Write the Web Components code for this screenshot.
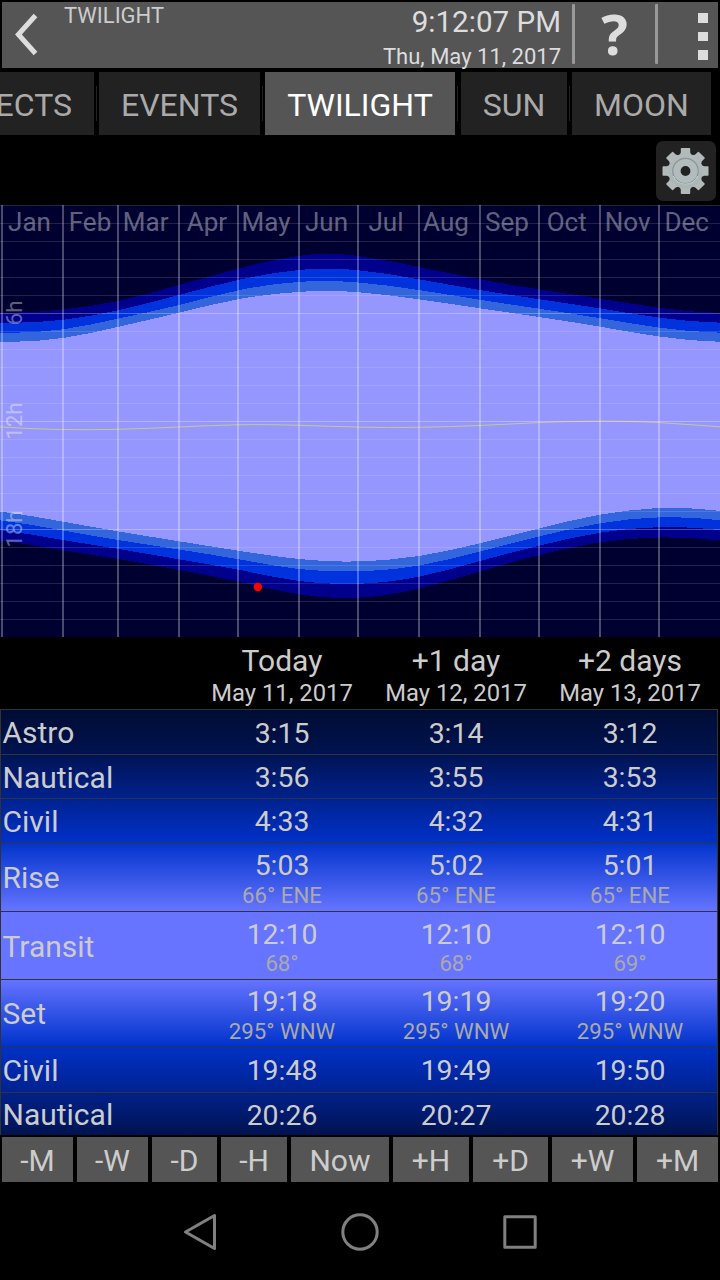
<!DOCTYPE html>
<html lang="en">
<head>
<meta charset="utf-8">
<title>Twilight</title>
<style>
  body {
    margin: 0;
    width: 720px;
    height: 1280px;
    overflow: hidden;
    background: #000;
    color: #ccc;
    font-family: Roboto, "Liberation Sans", sans-serif;
    display: flex;
    flex-direction: column;
  }
</style>
</head>
<body>
  <app-header heading="TWILIGHT" time="9:12:07 PM" date="Thu, May 11, 2017"></app-header>

  <tab-strip>
    <tab-item class="cut" style="width:94px">ECTS</tab-item>
    <tab-item style="width:161px">EVENTS</tab-item>
    <tab-item style="width:190px;margin-right:1px" active>TWILIGHT</tab-item>
    <tab-item style="width:106px">SUN</tab-item>
    <tab-item style="width:139px">MOON</tab-item>
  </tab-strip>

  <settings-bar></settings-bar>
  <twilight-chart></twilight-chart>
  <twilight-table></twilight-table>

  <step-bar>
    <step-button style="width:71px">-M</step-button>
    <step-button style="width:71px">-W</step-button>
    <step-button style="width:65px">-D</step-button>
    <step-button style="width:66px">-H</step-button>
    <step-button style="width:98px">Now</step-button>
    <step-button style="width:76px">+H</step-button>
    <step-button style="width:75px">+D</step-button>
    <step-button style="width:81px">+W</step-button>
    <step-button style="width:81px">+M</step-button>
  </step-bar>

  <system-nav></system-nav>

<script>
// small helper, every element gets an open shadow root from a template
function attach(el, html) {
  const template = document.createElement('template');
  template.innerHTML = html;
  const root = el.attachShadow({ mode: 'open' });
  root.append(template.content.cloneNode(true));
  return root;
}

/* HEADER */
class AppHeader extends HTMLElement {
  constructor() {
    super();
    attach(this, /*html*/`
      <style>
        :host {
          display: flex;
          flex: none;
          margin: 2px 2px 0;
          height: 66px;
          background: #555;
          color: #ddd;
        }
        svg { display: block; flex: none; }
        .title {
          flex: 1;
          padding: 1px 0 0 10px;
          font-size: 22px;
          line-height: 26px;
          color: #ccc;
        }
        .clock { text-align: right; padding-right: 11px; white-space: nowrap; }
        .time { font-size: 29.6px; line-height: 36px; padding-top: 2px; }
        .date { font-size: 22px; line-height: 26px; padding-top: 4px; }
        .rule { width: 3px; height: 60px; margin-top: 2px; background: #999; border-radius: 1px; }
        .help {
          width: 79px;
          padding-right: 1px;
          text-align: center;
          font: bold 56px/62px "Open Sans", "Noto Sans", sans-serif;
        }
        .menu { display: flex; flex-direction: column; gap: 9px; padding: 11px 10px 0 40px; }
        .menu i { width: 10px; height: 9.5px; background: #ddd; }
      </style>
      <svg width="52" height="66"><path d="M33.5 13.5 16.4 32.5 33.5 51.5" fill="none" stroke="#ddd" stroke-width="5"/></svg>
      <div class="title">${this.getAttribute('heading')}</div>
      <div class="clock">
        <div class="time">${this.getAttribute('time')}</div>
        <div class="date">${this.getAttribute('date')}</div>
      </div>
      <div class="rule"></div>
      <div class="help">?</div>
      <div class="rule"></div>
      <div class="menu"><i></i><i></i><i></i></div>
    `);
  }
}
customElements.define('app-header', AppHeader);

/* TABS */
class TabStrip extends HTMLElement {
  constructor() {
    super();
    attach(this, /*html*/`
      <style>
        :host { display: flex; flex: none; gap: 5px; height: 63px; margin-top: 4px; }
      </style>
      <slot></slot>
    `);
  }
}
customElements.define('tab-strip', TabStrip);

class TabItem extends HTMLElement {
  constructor() {
    super();
    attach(this, /*html*/`
      <style>
        :host {
          display: flex;
          flex: none;
          justify-content: center;
          box-sizing: border-box;
          position: relative;
          background: #222;
          color: #aaa;
          font-size: 32px;
          line-height: 66px;
        }
        :host([active]) { background: #555; color: #fff; }
        :host(.cut) { justify-content: flex-end; padding-right: 22px; }
        :host(:not(:last-child))::after {
          content: "";
          position: absolute;
          right: -3px;
          top: 14px;
          width: 1px;
          height: 35px;
          background: #222;
        }
      </style>
      <slot></slot>
    `);
  }
}
customElements.define('tab-item', TabItem);

/* SETTINGS */
class SettingsBar extends HTMLElement {
  constructor() {
    super();
    let teeth = '';
    for (let a = 0; a < 360; a += 45) {
      teeth += `<path d="M-6.5 -15 L-4.7 -18.5 V-22.3 Q-4.7 -23 -4 -23 H4 Q4.7 -23 4.7 -22.3 V-18.5 L6.5 -15 Z" transform="rotate(${a})"/>`;
    }
    attach(this, /*html*/`
      <style>
        :host { display: flex; flex: none; justify-content: flex-end; height: 70px; }
        .btn { width: 60px; height: 60px; margin: 6px 4px 0 0; border-radius: 7px; background: #222; }
        svg { display: block; }
      </style>
      <div class="btn">
        <svg width="60" height="60" viewBox="0 0 60 60">
          <defs>
            <linearGradient id="metal" x1="0" y1="-23" x2="0" y2="23" gradientUnits="userSpaceOnUse">
              <stop offset="0" stop-color="#b3baba"/>
              <stop offset="1" stop-color="#aab5b5"/>
            </linearGradient>
          </defs>
          <g transform="translate(29.5 30)">
            <g fill="url(#metal)">${teeth}<circle r="17.5"/></g>
            <circle r="12.7" fill="#b2bcbc" stroke="#8b9595" stroke-width="1.2"/>
            <path d="M-12.2 5A13.2 13.2 0 0 0 12.2 5" fill="none" stroke="#c8d0d0"/>
            <circle r="4.9" fill="#222"/>
          </g>
        </svg>
      </div>
    `);
  }
}
customElements.define('settings-bar', SettingsBar);

/* CHART */
const months = [
  ['Jan', 2, 29.5], ['Feb', 63, 90], ['Mar', 118, 145.7], ['Apr', 179, 207],
  ['May', 238, 266], ['Jun', 299, 326.5], ['Jul', 358, 386], ['Aug', 419, 446],
  ['Sep', 480, 507], ['Oct', 539, 566.7], ['Nov', 600, 627.7], ['Dec', 659, 686.7]
];

// x, then morning edge of astro / nautical / civil / day
const morning = [
  [0, 312.9, 322.7, 332.7, 341.8], [63, 309.5, 319.8, 329.3, 338], [118, 301, 310.3, 318.7, 326.9],
  [179, 285, 295, 305, 312.7], [240, 268.3, 279.6, 290, 298.9], [299, 255.8, 270, 281.9, 291.9],
  [325, 253.8, 268.6, 281, 290.8], [358, 256, 270.2, 282.5, 292.2], [419, 267, 279.3, 290, 299.3],
  [480, 279.3, 290, 299.8, 308.3], [539, 289.3, 299.2, 308.7, 317], [600, 298.7, 308.4, 318.2, 326.7],
  [659, 307.8, 317.6, 327.6, 336.5], [720, 312.9, 322.7, 332.7, 341.8]
];
// x, then evening edge of day / civil / nautical / astro
const evening = [
  [0, 511.5, 520.3, 530, 540.5], [63, 521.7, 530.5, 540, 550.3], [118, 531.3, 540, 548.9, 559],
  [179, 541.3, 549.5, 559.3, 569.8], [240, 551, 559.5, 570, 582], [299, 559, 569, 581, 594.3],
  [345, 561.6, 571.4, 584, 598.1], [419, 556, 565.5, 576.7, 588.5],
  [480, 543.3, 551.5, 561, 571.5], [539, 528.4, 536.5, 545.7, 555.2], [600, 514.7, 523.3, 532.7, 542.3],
  [660, 508.1, 517.3, 527.1, 537.5], [720, 510.9, 520.2, 530, 540.5]
];
const noon = [
  [0, 426.9], [70, 429.6], [118, 429.3], [179, 427], [238, 424.8],
  [299, 425.3], [358, 427.1], [419, 427.3], [480, 425.5], [539, 422.6], [600, 421.1],
  [659, 422.6], [720, 426.8]
];

// smooth cubic spline through all points, the year wraps round
function curve(rows, col) {
  const p = rows.map(r => [r[0], r[col] - 205]);
  const n = p.length - 1;
  const h = [], s = [], m = [];
  for (let i = 0; i < n; i++) {
    h[i] = p[i + 1][0] - p[i][0];
    s[i] = (p[i + 1][1] - p[i][1]) / h[i];
    m[i] = s[i];
  }
  for (let k = 0; k < 40; k++) {
    for (let i = 0; i < n; i++) {
      const j = (i + n - 1) % n;
      const next = m[(i + 1) % n];
      m[i] = (3 * (h[i] * s[j] + h[j] * s[i]) - h[i] * m[j] - h[j] * next) / (2 * (h[i] + h[j]));
    }
  }
  m[n] = m[0];
  let d = `${p[0][0]} ${p[0][1]}`;
  for (let i = 0; i < n; i++) {
    const t = h[i] / 3;
    const [x0, y0] = p[i];
    const [x1, y1] = p[i + 1];
    d += ` C${x0 + t} ${y0 + m[i] * t} ${x1 - t} ${y1 - m[i + 1] * t} ${x1} ${y1}`;
  }
  return d;
}

class TwilightChart extends HTMLElement {
  constructor() {
    super();
    const fills = ['#00008c', '#0033dd', '#3366dd', '#9696ff'];
    let bands = '';
    fills.forEach((fill, i) => {
      // evening edge is walked right to left
      const back = evening.map(r => [720 - r[0], r[4 - i]]).reverse();
      const bottom = curve(back, 1).replace(/(-?[\d.]+) (-?[\d.]+)/g, (m, x, y) => `${720 - x} ${y}`);
      bands += `<path fill="${fill}" d="M${curve(morning, i + 1)} L${bottom} Z"/>`;
    });

    let grid = '';
    for (let h = 0; h < 24; h++) {
      grid += `<rect y="${h * 18}" width="720" height="1" fill-opacity="${h && h % 6 === 0 ? 0.28 : 0.13}"/>`;
    }
    months.forEach(m => {
      grid += `<rect x="${m[1] - 1}" width="2" height="432" fill-opacity=".29"/>`;
    });

    attach(this, /*html*/`
      <style>
        :host { display: block; flex: none; height: 432px; background: #000030; }
        svg { display: block; }
        text { fill: #fff; fill-opacity: .4; text-anchor: middle; }
        .month { font-size: 26px; }
        .hour { font-size: 22px; }
      </style>
      <svg width="720" height="432" viewBox="0 0 720 432">
        <g shape-rendering="crispEdges">${bands}</g>
        <path d="M${curve(noon, 1)}" fill="none" stroke="#c8c88c" stroke-width="1"/>
        <g fill="#fff">${grid}</g>
        ${months.map(m => `<text class="month" x="${m[2]}" y="26">${m[0]}</text>`).join('')}
        ${[6, 12, 18].map(h => `<text class="hour" transform="translate(22 ${h * 18}) rotate(-90)">${h}h</text>`).join('')}
        <circle cx="257.8" cy="382" r="4.2" fill="#f00"/>
      </svg>
    `);
  }
}
customElements.define('twilight-chart', TwilightChart);

/* TABLE */
const days = [['Today', 'May 11, 2017'], ['+1 day', 'May 12, 2017'], ['+2 days', 'May 13, 2017']];
// label, height, top colour, bottom colour, times, directions
const rows = [
  ['Astro', 45, '#000c33', '#001350', ['3:15', '3:14', '3:12']],
  ['Nautical', 44, '#001353', '#00218c', ['3:56', '3:55', '3:53']],
  ['Civil', 44, '#00228f', '#0030c8', ['4:33', '4:32', '4:31']],
  ['Rise', 69, '#0033cc', '#6674ff', ['5:03', '5:02', '5:01'], ['66° ENE', '65° ENE', '65° ENE']],
  ['Transit', 68, '#6674ff', '#6674ff', ['12:10', '12:10', '12:10'], ['68°', '68°', '69°']],
  ['Set', 67, '#6674ff', '#0033cc', ['19:18', '19:19', '19:20'], ['295° WNW', '295° WNW', '295° WNW']],
  ['Civil', 46, '#0031c8', '#00228f', ['19:48', '19:49', '19:50']],
  ['Nautical', 43, '#00218c', '#001350', ['20:26', '20:27', '20:28']]
];

class TwilightTable extends HTMLElement {
  constructor() {
    super();
    const head = days.map(d => `<div class="day"><b>${d[0]}</b><span>${d[1]}</span></div>`).join('');
    const body = rows.map(([label, height, from, to, times, dirs]) => `
      <div class="row" style="height:${height}px;background:linear-gradient(${from},${to})">
        <div class="label">${label}</div>
        ${times.map((t, i) => `<div class="cell"><span>${t}</span>${dirs ? `<small>${dirs[i]}</small>` : ''}</div>`).join('')}
      </div>`).join('');
    attach(this, /*html*/`
      <style>
        :host { display: block; flex: none; height: 498px; }
        .head, .row { display: grid; grid-template-columns: 194px 174px 174px 174px; }
        .head { height: 72px; padding-left: 1px; }
        .day { display: flex; flex-direction: column; align-items: center; white-space: nowrap; }
        .day b { font-weight: 400; font-size: 30px; line-height: 35px; padding-top: 6px; }
        .day span { font-size: 23.8px; line-height: 28px; padding-top: 0.5px; }
        .row {
          box-sizing: border-box;
          width: 718px;
          border: solid #333;
          border-width: 1px 1px 0;
          background-origin: border-box !important;
          align-items: center;
        }
        .label { font-size: 30px; line-height: 36px; padding: 2.5px 0 0 1.5px; }
        .cell { display: flex; flex-direction: column; align-items: center; padding-top: 3px; }
        .cell span { font-size: 28.4px; line-height: 34px; }
        .cell small { font-size: 22.2px; line-height: 26px; margin-top: -1.5px; color: #aaa; }
      </style>
      <div class="head"><div></div>${head}</div>
      ${body}
    `);
  }
}
customElements.define('twilight-table', TwilightTable);

/* STEP BUTTONS */
class StepBar extends HTMLElement {
  constructor() {
    super();
    attach(this, /*html*/`
      <style>
        :host { display: flex; flex: none; gap: 4px; height: 45px; margin: 2px 2px 0; }
      </style>
      <slot></slot>
    `);
  }
}
customElements.define('step-bar', StepBar);

class StepButton extends HTMLElement {
  constructor() {
    super();
    attach(this, /*html*/`
      <style>
        :host {
          display: block;
          flex: 0 1 auto;
          background: #555;
          color: #ccc;
          text-align: center;
          font-size: 30px;
          line-height: 48px;
        }
      </style>
      <slot></slot>
    `);
  }
}
customElements.define('step-button', StepButton);

/* ANDROID NAVIGATION */
class SystemNav extends HTMLElement {
  constructor() {
    super();
    attach(this, /*html*/`
      <style>
        :host { display: flex; flex: 1; justify-content: center; align-items: center; gap: 120px; padding-top: 2px; }
        svg { display: block; fill: none; stroke: #808080; stroke-width: 3; stroke-linejoin: round; }
      </style>
      <svg width="40" height="40"><path d="M5.5 20 34.5 3.5V36.5Z"/></svg>
      <svg width="40" height="40"><circle cx="20" cy="20" r="17.2"/></svg>
      <svg width="40" height="40"><rect x="4.8" y="4.8" width="30.4" height="30.4"/></svg>
    `);
  }
}
customElements.define('system-nav', SystemNav);
</script>
</body>
</html>
